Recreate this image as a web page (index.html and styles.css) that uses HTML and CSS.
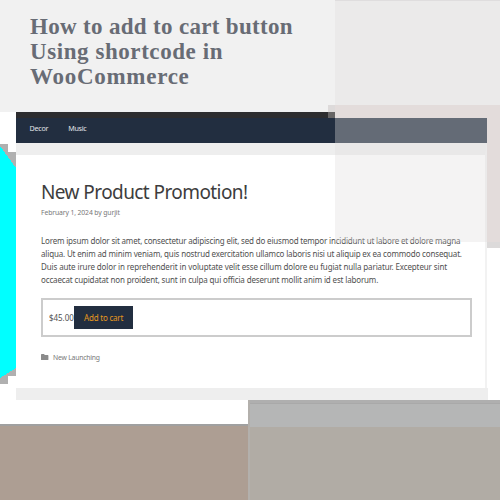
FILE: index.html
```
<!DOCTYPE html>
<html lang="en">
<head>
<meta charset="utf-8">
<title>How to add to cart button</title>
<link rel="stylesheet" href="styles.css">
</head>
<body>
<main class="poster">
  <header class="banner">
    <h1><span class="t1">How to add to cart button</span><span class="t2">Using shortcode in</span><span class="t3">WooCommerce</span></h1>
  </header>
  <div class="rose"></div>
  <div class="stage">
    <svg class="ribbon" width="16" height="240" viewBox="0 0 16 240" shape-rendering="crispEdges"><path fill="#b0b0b0" d="M0 0h8v8h8v224H8v8H0z"/><path fill="#0ff" d="M0 2 16 24V224L0 234z"/></svg>
    <section class="window">
      <nav><span class="n1">Decor</span><span class="n2">Music</span></nav>
      <article>
        <h2><span>New Product Promotion!</span></h2>
        <p class="meta"><span>February 1, 2024 by gurjit</span></p>
        <p class="copy">
          <span class="l1">Lorem ipsum dolor sit amet, consectetur adipiscing elit, sed do eiusmod tempor incididunt ut labore et dolore magna</span>
          <span class="l2">aliqua. Ut enim ad minim veniam, quis nostrud exercitation ullamco laboris nisi ut aliquip ex ea commodo consequat.</span>
          <span class="l3">Duis aute irure dolor in reprehenderit in voluptate velit esse cillum dolore eu fugiat nulla pariatur. Excepteur sint</span>
          <span class="l4">occaecat cupidatat non proident, sunt in culpa qui officia deserunt mollit anim id est laborum.</span>
        </p>
        <div class="cart"><span class="price">$45.00</span><span class="button">Add to cart</span></div>
        <div class="category"><svg width="8" height="7" viewBox="0 0 8 7"><path fill="#8b8b8b" d="M0 .7Q0 0 .7 0H3l.8 1h3Q7.4 1 7.4 1.7V5.4Q7.4 6 6.8 6H.6Q0 6 0 5.4z"/></svg><span>New Launching</span></div>
      </article>
    </section>
  </div>
  <footer><div class="clay"></div><div class="stone"></div></footer>
  <div class="veil"></div>
  <div class="joint"></div>
  <div class="seam"></div>
</main>
</body>
</html>
```
FILE: styles.css
```
* { box-sizing: border-box; }
body { margin: 0; background: #fff; font-family: "Noto Sans", sans-serif; color: #505050; }
.poster { position: relative; width: 500px; height: 500px; overflow: hidden; }
span { white-space: nowrap; }
.banner { height: 112px; padding: 14px 30px; background: #f1f1f1; }
h1 { margin: 0; font: bold 23px/25px "Liberation Serif", serif; color: #686c75; }
h1 span { display: block; width: max-content; }
.t1 { letter-spacing: .32px; }
.t2 { letter-spacing: .57px; }
.t3 { letter-spacing: .72px; }
.rose { position: absolute; left: 335px; top: 105px; width: 165px; height: 143px; background: #e5dcdb; border-bottom: 6px solid #dcdada; }
.stage { position: relative; height: 288px; padding-left: 16px; }
.ribbon { position: absolute; left: 0; top: 32px; }
.window { width: 472px; height: 288px; padding-top: 6px; background: linear-gradient(#2d2d2f, #2d2d2f) 0 0 / 319px 6px no-repeat, linear-gradient(#eee, #eee) 0 276px / 472px 12px no-repeat; }
nav { display: flex; gap: 20px; width: 471px; height: 25px; padding-left: 13.5px; background: #222e40; color: #e1e4e8; font-size: 7.2px; line-height: 20px; }
.n1, .n2 { letter-spacing: -.28px; }
article { width: 471px; height: 245px; padding: 24px 15px 0 25px; border-top: 12px solid #eee; border-right: 2px solid #f2f2f2; background: #fff; }
h2 { margin: 0; font-size: 19px; font-weight: 400; line-height: 26px; color: #3d3d3d; }
h2 span { letter-spacing: -.58px; }
.meta { margin: 3px 0 17px; font-size: 6.8px; line-height: 10px; letter-spacing: -.11px; color: #777; }
.copy { margin: 0; font-size: 8px; line-height: 12.9px; height: 52px; }
.copy span { display: block; width: max-content; }
.copy .l1 { letter-spacing: -.18px; }
.copy .l2 { letter-spacing: -.162px; }
.copy .l3 { letter-spacing: -.122px; }
.copy .l4 { letter-spacing: -.152px; }
.cart { display: flex; align-items: center; width: 431px; height: 39px; margin-top: 11px; padding-left: 6px; border: 2px solid #ccc; font-size: 8px; }
.price { width: 25px; letter-spacing: -.05px; }
.button { width: 59px; height: 23px; padding-left: 10px; line-height: 23px; letter-spacing: -.2px; background: #222e40; color: #e6981e; }
.category { display: flex; align-items: center; gap: 4px; height: 10px; margin-top: 15px; font-size: 6.8px; letter-spacing: -.2px; color: #777; }
footer { display: flex; align-items: flex-end; height: 100px; }
.clay { width: 248px; height: 76px; background: #ad9e93; border-top: 2px solid #a0a0a0; }
.stone { width: 252px; height: 100px; border-left: 2px solid #b3b0ac; background: linear-gradient(#afafaf 0 3px, #a9a9a9 3px 4px, #b5b6b6 4px 27px, #b1aca5 27px); }
.veil { position: absolute; left: 335px; top: 0; width: 165px; height: 242px; background: rgba(224,220,222,.35); }
.joint { position: absolute; left: 328px; top: 105px; width: 7px; height: 13px; background: linear-gradient(#dddada 7px, #676565 7px); }
.seam { position: absolute; left: 335px; top: 0; width: 165px; height: 1px; background: #dfddde; }
```
